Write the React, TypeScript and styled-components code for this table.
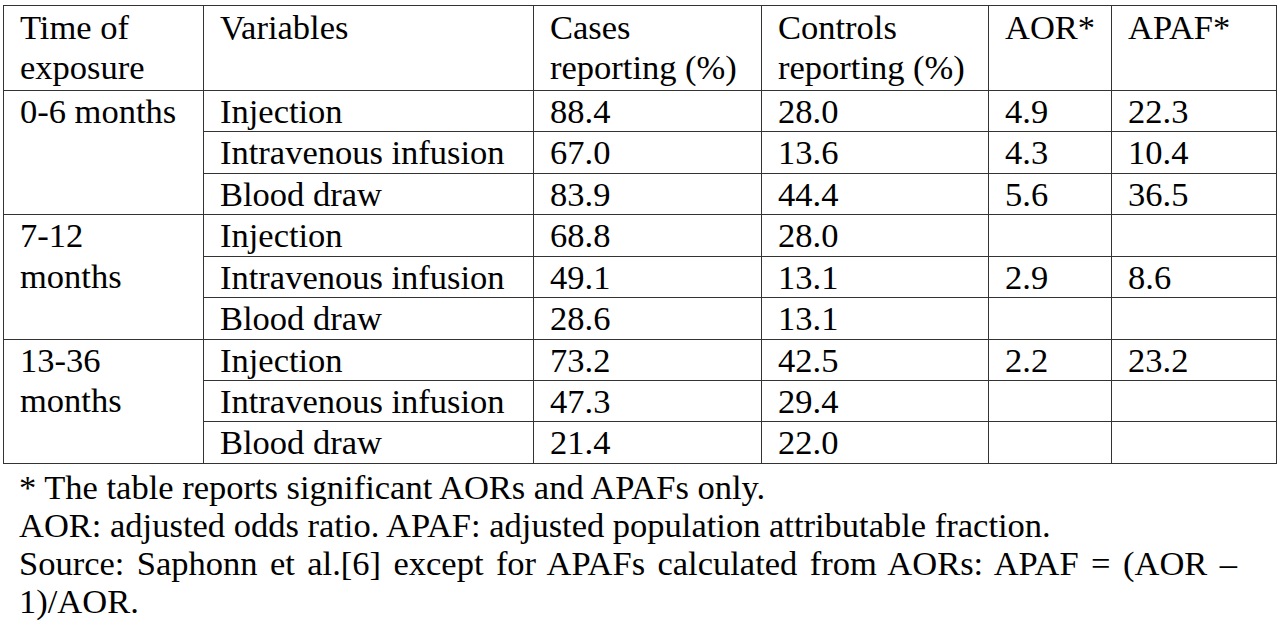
import React from "react";
import styled, { createGlobalStyle } from "styled-components";

const serif = `"Liberation Serif", "Times New Roman", Times, serif`;

const GlobalStyle = createGlobalStyle`
  html, body {
    margin: 0;
    padding: 0;
    background: #ffffff;
  }
  body {
    font-family: ${serif};
    color: #000000;
  }
`;

const Page = styled.div`
  padding: 5px 0 0 3px;
  width: 1273px;
  font-family: ${serif};
`;

const Table = styled.table`
  width: 1273px;
  table-layout: fixed;
  border-collapse: collapse;
  font-family: ${serif};
  font-size: 34.5px;
  color: #000000;
`;

const HeadCell = styled.th`
  border: 1px solid #333333;
  padding: 1px 0 2px 16px;
  text-align: left;
  vertical-align: top;
  font-family: ${serif};
  font-weight: normal;
  line-height: 40.44px;
`;

const Cell = styled.td`
  border: 1px solid #333333;
  padding: 0 0 0 16px;
  text-align: left;
  vertical-align: top;
  font-family: ${serif};
  line-height: 40.44px;
  white-space: nowrap;
`;

const Notes = styled.div`
  margin-top: 4px;
  padding-left: 16px;
  width: 1218px;
  font-family: ${serif};
  font-size: 34.5px;
  line-height: 38px;
  color: #000000;
`;

const NoteLine = styled.div<{ $justify?: boolean }>`
  white-space: nowrap;
  ${(p) =>
    p.$justify
      ? "white-space: normal; text-align: justify; text-align-last: justify;"
      : ""}
`;

type Row = { variable: string; cases: string; controls: string; aor: string; apaf: string };
type Group = { time: string[]; rows: Row[] };

const groups: Group[] = [
  {
    time: ["0-6 months"],
    rows: [
      { variable: "Injection", cases: "88.4", controls: "28.0", aor: "4.9", apaf: "22.3" },
      { variable: "Intravenous infusion", cases: "67.0", controls: "13.6", aor: "4.3", apaf: "10.4" },
      { variable: "Blood draw", cases: "83.9", controls: "44.4", aor: "5.6", apaf: "36.5" },
    ],
  },
  {
    time: ["7-12", "months"],
    rows: [
      { variable: "Injection", cases: "68.8", controls: "28.0", aor: "", apaf: "" },
      { variable: "Intravenous infusion", cases: "49.1", controls: "13.1", aor: "2.9", apaf: "8.6" },
      { variable: "Blood draw", cases: "28.6", controls: "13.1", aor: "", apaf: "" },
    ],
  },
  {
    time: ["13-36", "months"],
    rows: [
      { variable: "Injection", cases: "73.2", controls: "42.5", aor: "2.2", apaf: "23.2" },
      { variable: "Intravenous infusion", cases: "47.3", controls: "29.4", aor: "", apaf: "" },
      { variable: "Blood draw", cases: "21.4", controls: "22.0", aor: "", apaf: "" },
    ],
  },
];

export default function App() {
  return (
    <>
      <GlobalStyle />
      <Page>
        <Table>
          <colgroup>
            <col style={{ width: 200 }} />
            <col style={{ width: 330 }} />
            <col style={{ width: 228 }} />
            <col style={{ width: 227 }} />
            <col style={{ width: 123 }} />
            <col style={{ width: 165 }} />
          </colgroup>
          <thead>
            <tr>
              <HeadCell>Time of<br />exposure</HeadCell>
              <HeadCell>Variables</HeadCell>
              <HeadCell>Cases<br />reporting (%)</HeadCell>
              <HeadCell>Controls<br />reporting (%)</HeadCell>
              <HeadCell>AOR*</HeadCell>
              <HeadCell>APAF*</HeadCell>
            </tr>
          </thead>
          <tbody>
            {groups.map((g, gi) =>
              g.rows.map((r, ri) => (
                <tr key={`${gi}-${ri}`}>
                  {ri === 0 && (
                    <Cell rowSpan={3}>
                      {g.time.map((t, ti) => (
                        <React.Fragment key={ti}>
                          {ti > 0 && <br />}
                          {t}
                        </React.Fragment>
                      ))}
                    </Cell>
                  )}
                  <Cell>{r.variable}</Cell>
                  <Cell>{r.cases}</Cell>
                  <Cell>{r.controls}</Cell>
                  <Cell>{r.aor}</Cell>
                  <Cell>{r.apaf}</Cell>
                </tr>
              ))
            )}
          </tbody>
        </Table>
        <Notes>
          <NoteLine>* The table reports significant AORs and APAFs only.</NoteLine>
          <NoteLine>AOR: adjusted odds ratio. APAF: adjusted population attributable fraction.</NoteLine>
          <NoteLine $justify>Source: Saphonn et al.[6] except for APAFs calculated from AORs: APAF = (AOR –</NoteLine>
          <NoteLine>1)/AOR.</NoteLine>
        </Notes>
      </Page>
    </>
  );
}
